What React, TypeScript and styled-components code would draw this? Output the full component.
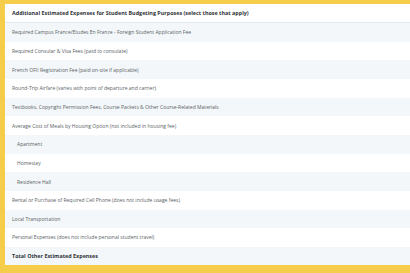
import styled, { createGlobalStyle } from 'styled-components'

const GlobalStyle = createGlobalStyle`
html, body {
    margin: 0;
    padding: 0;
    background: #f6cd4a;
}
`

interface Row {
    label: string;
    bold?: boolean;
    indent?: boolean;
}

const rows: Row[] = [
    { label: 'Additional Estimated Expenses for Student Budgeting Purposes (select those that apply)', bold: true },
    { label: 'Required Campus France/Etudes En France - Foreign Student Application Fee' },
    { label: 'Required Consular & Visa Fees (paid to consulate)' },
    { label: 'French OFII Registration Fee (paid on-site if applicable)' },
    { label: 'Round-Trip Airfare (varies with point of departure and carrier)' },
    { label: 'Textbooks, Copyright Permission Fees, Course Packets & Other Course-Related Materials' },
    { label: 'Average Cost of Meals by Housing Option (not included in housing fee)' },
    { label: 'Apartment', indent: true },
    { label: 'Homestay', indent: true },
    { label: 'Residence Hall', indent: true },
    { label: 'Rental or Purchase of Required Cell Phone (does not include usage fees)' },
    { label: 'Local Transportation' },
    { label: 'Personal Expenses (does not include personal student travel)' },
    { label: 'Total Other Estimated Expenses', bold: true },
]

const App = () => {
    return (
        <>
            <GlobalStyle />
            <Page>
                <Table>
                    {rows.map((r, i) => (
                        <ExpenseRow key={i} striped={i % 2 === 1} header={i === 0}>
                            <Label bold={r.bold} indent={r.indent}>{r.label}</Label>
                        </ExpenseRow>
                    ))}
                </Table>
            </Page>
        </>
    )
}

//styled components for the expense table.

const Page = styled.div`
padding: 4px 0 0 5px;
height: 273px;
box-sizing: border-box;
overflow: hidden;
`

const Table = styled.div`
background: #ffffff;
display: flex;
flex-direction: column;
font-family: "Open Sans", "Liberation Sans", sans-serif;
`

const ExpenseRow = styled.div<{ striped: boolean; header: boolean }>`
height: ${(p) => (p.header ? '18.1px' : '18.65px')};
display: flex;
align-items: center;
background: ${(p) => (p.striped ? '#f3f7f9' : '#ffffff')};
border-bottom: ${(p) => (p.header ? '1px solid #e6e9ec' : 'none')};
`

const Label = styled.span<{ bold?: boolean; indent?: boolean }>`
font-size: ${(p) => (p.bold ? '5.42px' : '5.03px')};
padding-left: ${(p) => (p.indent ? '12px' : '7px')};
color: ${(p) => (p.bold ? '#2f3338' : '#5a5f66')};
font-weight: ${(p) => (p.bold ? 700 : 400)};
white-space: nowrap;
`

export default App
